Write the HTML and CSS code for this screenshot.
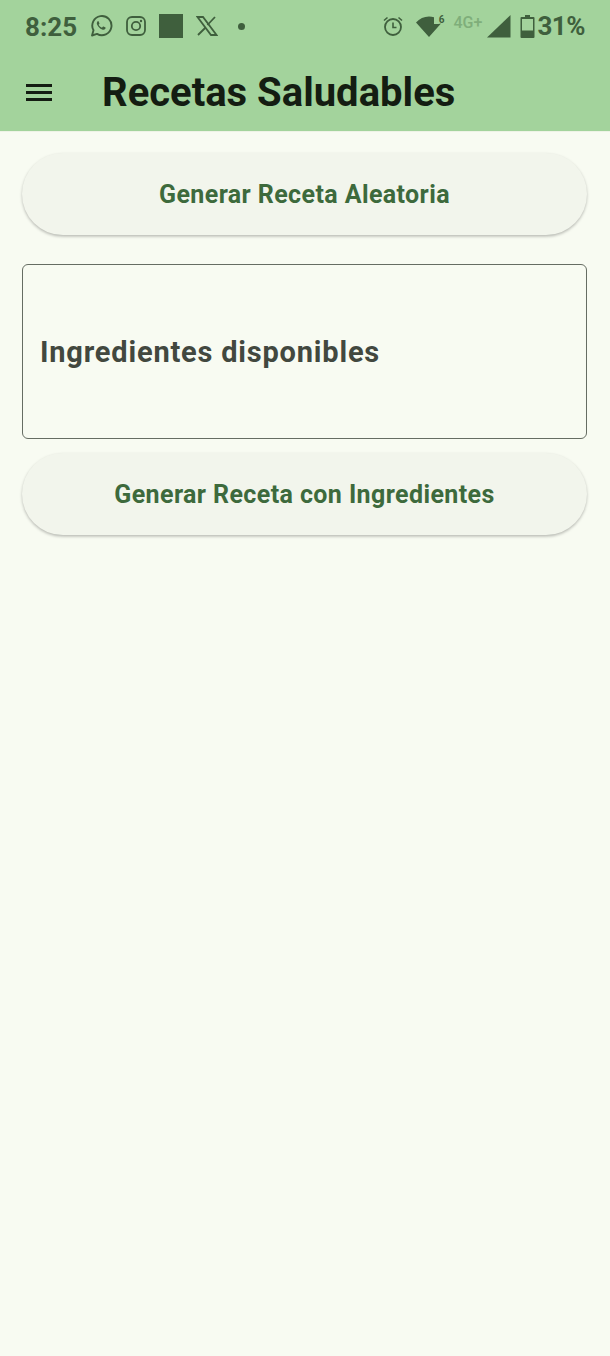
FILE: index.html
```html
<!DOCTYPE html>
<html lang="en">
<head>
  <meta charset="UTF-8">
  <meta name="viewport" content="width=device-width, initial-scale=1.0">
  <title>Recetas Saludables</title>
  <link rel="stylesheet" href="styles.css">
</head>
<body>
  <header class="app-header">
    <div class="status-bar">
      <div class="status-left">
        <span class="clock">8:25</span>
        <svg class="icon-whatsapp" viewBox="0 0 24 24" width="24" height="24">
          <path d="M3 21.5l1.5-5.2A9.6 9.6 0 1 1 8 19.9z" fill="none" stroke="#3f5f3d" stroke-width="1.9" stroke-linejoin="round"/>
          <path d="M8.6 7.4c-.9.8-1 2-.4 3.3 1 2.2 2.700 3.800 4.900 4.800 1.300.5 2.500.3 3.200-.7.400-.6.400-1.100.200-1.300l-2-1c-.3-.1-.5 0-.7.200l-.6.800c-.2.200-.4.200-.7.100-1.200-.5-2.100-1.400-2.800-2.500-.1-.3-.1-.4.100-.6l.5-.6c.1-.2.200-.4.100-.6l-.8-1.900c-.2-.4-.7-.5-1-.3z" fill="#3f5f3d"/>
        </svg>
        <svg class="icon-instagram" viewBox="0 0 22 22" width="22" height="22">
          <rect x="2" y="2" width="18" height="18" rx="5" fill="none" stroke="#3f5f3d" stroke-width="1.8"/>
          <circle cx="11" cy="11" r="4.200" fill="none" stroke="#3f5f3d" stroke-width="1.800"/>
          <circle cx="16" cy="6" r="1.200" fill="#3f5f3d"/>
        </svg>
        <span class="app-square"></span>
        <svg class="icon-x" viewBox="0 0 22 20" width="22" height="20">
          <path d="M1.500 1h5.500l13.500 18h-5.500z" fill="none" stroke="#3f5f3d" stroke-width="1.800"/>
          <path d="M19 1l-7.600 8M9.600 11.500L2 19" fill="none" stroke="#3f5f3d" stroke-width="1.800"/>
        </svg>
        <span class="dot"></span>
      </div>
      <div class="status-right">
        <svg class="icon-alarm" viewBox="0 0 22 22" width="22" height="22">
          <circle cx="11" cy="12" r="8" fill="none" stroke="#3f5f3d" stroke-width="1.800"/>
          <path d="M11 7.500V12.500H14.500" fill="none" stroke="#3f5f3d" stroke-width="1.600"/>
          <path d="M2 5.500L5.500 2.500M20 5.500L16.500 2.500" fill="none" stroke="#3f5f3d" stroke-width="1.600"/>
        </svg>
        <span class="wifi">
          <svg viewBox="0 0 30 24" width="30" height="24">
            <path d="M1 8.500C4.500 4.500 9 2.500 14 2.500c1.800 0 3.500.3 5 .8V10h4.500l2.500-.5L14 23z" fill="#3f5f3d"/>
          </svg>
          <span class="wifi-six">6</span>
        </span>
        <span class="network">4G+</span>
        <svg class="icon-signal" viewBox="0 0 24 24" width="24" height="24">
          <path d="M0 23.500L23.500 1V23.500z" fill="#3f5f3d"/>
        </svg>
        <svg class="icon-battery" viewBox="0 0 15 24" width="15" height="24">
          <path d="M5 1h5v2h3.500a1 1 0 0 1 1 1v19a1 1 0 0 1-1 1h-12a1 1 0 0 1-1-1V4a1 1 0 0 1 1-1H5z" fill="#3f5f3d"/>
          <rect x="2" y="5" width="11" height="11.500" fill="#a3d39c"/>
        </svg>
        <span class="battery-level">31%</span>
      </div>
    </div>
    <div class="toolbar">
      <span class="menu-icon"><i></i><i></i><i></i></span>
      <h1>Recetas Saludables</h1>
    </div>
  </header>

  <main class="content">
    <button class="action-btn" type="button">Generar Receta Aleatoria</button>
    <div class="ingredients-field">Ingredientes disponibles</div>
    <button class="action-btn" type="button">Generar Receta con Ingredientes</button>
  </main>
</body>
</html>
```

FILE: styles.css
```css
html, body {
  height: 100%;
}

body {
  margin: 0;
  background-color: #f8fbf2;
  font-family: Roboto, "Liberation Sans", sans-serif;
}

.app-header {
  background-color: #a3d39c;
  height: 131px;
  box-shadow: 0 1px 0 #eef3e6;
}

.status-bar {
  display: flex;
  justify-content: space-between;
  align-items: center;
  height: 52px;
  padding: 0 25px 0 25px;
  color: #3f5f3d;
}

.status-left, .status-right {
  display: flex;
  align-items: center;
}

.clock {
  font-size: 26px;
  font-weight: 700;
  width: 52px;
  margin-right: 12px;
  padding-top: 1px;
}

.icon-whatsapp {
  margin-right: 12px;
}

.icon-instagram {
  margin-right: 12px;
}

.app-square {
  width: 24px;
  height: 24px;
  background-color: #3f5f3d;
  margin-right: 13px;
}

.dot {
  width: 7px;
  height: 7px;
  border-radius: 50%;
  background-color: #3f5f3d;
  margin-left: 20px;
}

.icon-alarm {
  margin-right: 11px;
}

.wifi {
  position: relative;
  display: flex;
  margin-right: 8px;
}

.wifi-six {
  position: absolute;
  top: 0;
  right: 1px;
  font-size: 10px;
  font-weight: 700;
}

.network {
  font-size: 16px;
  font-weight: 500;
  color: #7fae7a;
  width: 34px;
  margin-bottom: 8px;
}

.icon-signal {
  margin-right: 9px;
}

.icon-battery {
  margin-right: 2px;
}

.battery-level {
  font-size: 26px;
  font-weight: 700;
  letter-spacing: -0.5px;
}

.toolbar {
  display: flex;
  align-items: center;
  height: 79px;
  padding: 2px 0 0 26px;
  box-sizing: border-box;
}

.menu-icon {
  display: flex;
  flex-direction: column;
  gap: 4px;
  width: 26px;
  margin-right: 50px;
}

.menu-icon i {
  display: block;
  height: 3px;
  background-color: #141d12;
}

.toolbar h1 {
  margin: 0;
  font-size: 40px;
  font-weight: 700;
  color: #141d12;
}

.content {
  display: flex;
  flex-direction: column;
  padding: 22px 23px 0 22px;
}

.action-btn {
  height: 82px;
  border: none;
  border-radius: 41px;
  background-color: #f2f5ec;
  box-shadow: 0 1.500px 3px rgba(0, 0, 0, 0.26);
  color: #3d6a3c;
  font-family: inherit;
  font-size: 25px;
  font-weight: 700;
  letter-spacing: 0.4px;
}

.ingredients-field {
  display: flex;
  align-items: center;
  box-sizing: border-box;
  height: 175px;
  margin: 29px 0 14px;
  padding-left: 17px;
  border: 1.500px solid #666d63;
  border-radius: 6px;
  color: #42483f;
  font-size: 29px;
  font-weight: 700;
  letter-spacing: 0.8px;
}
```
